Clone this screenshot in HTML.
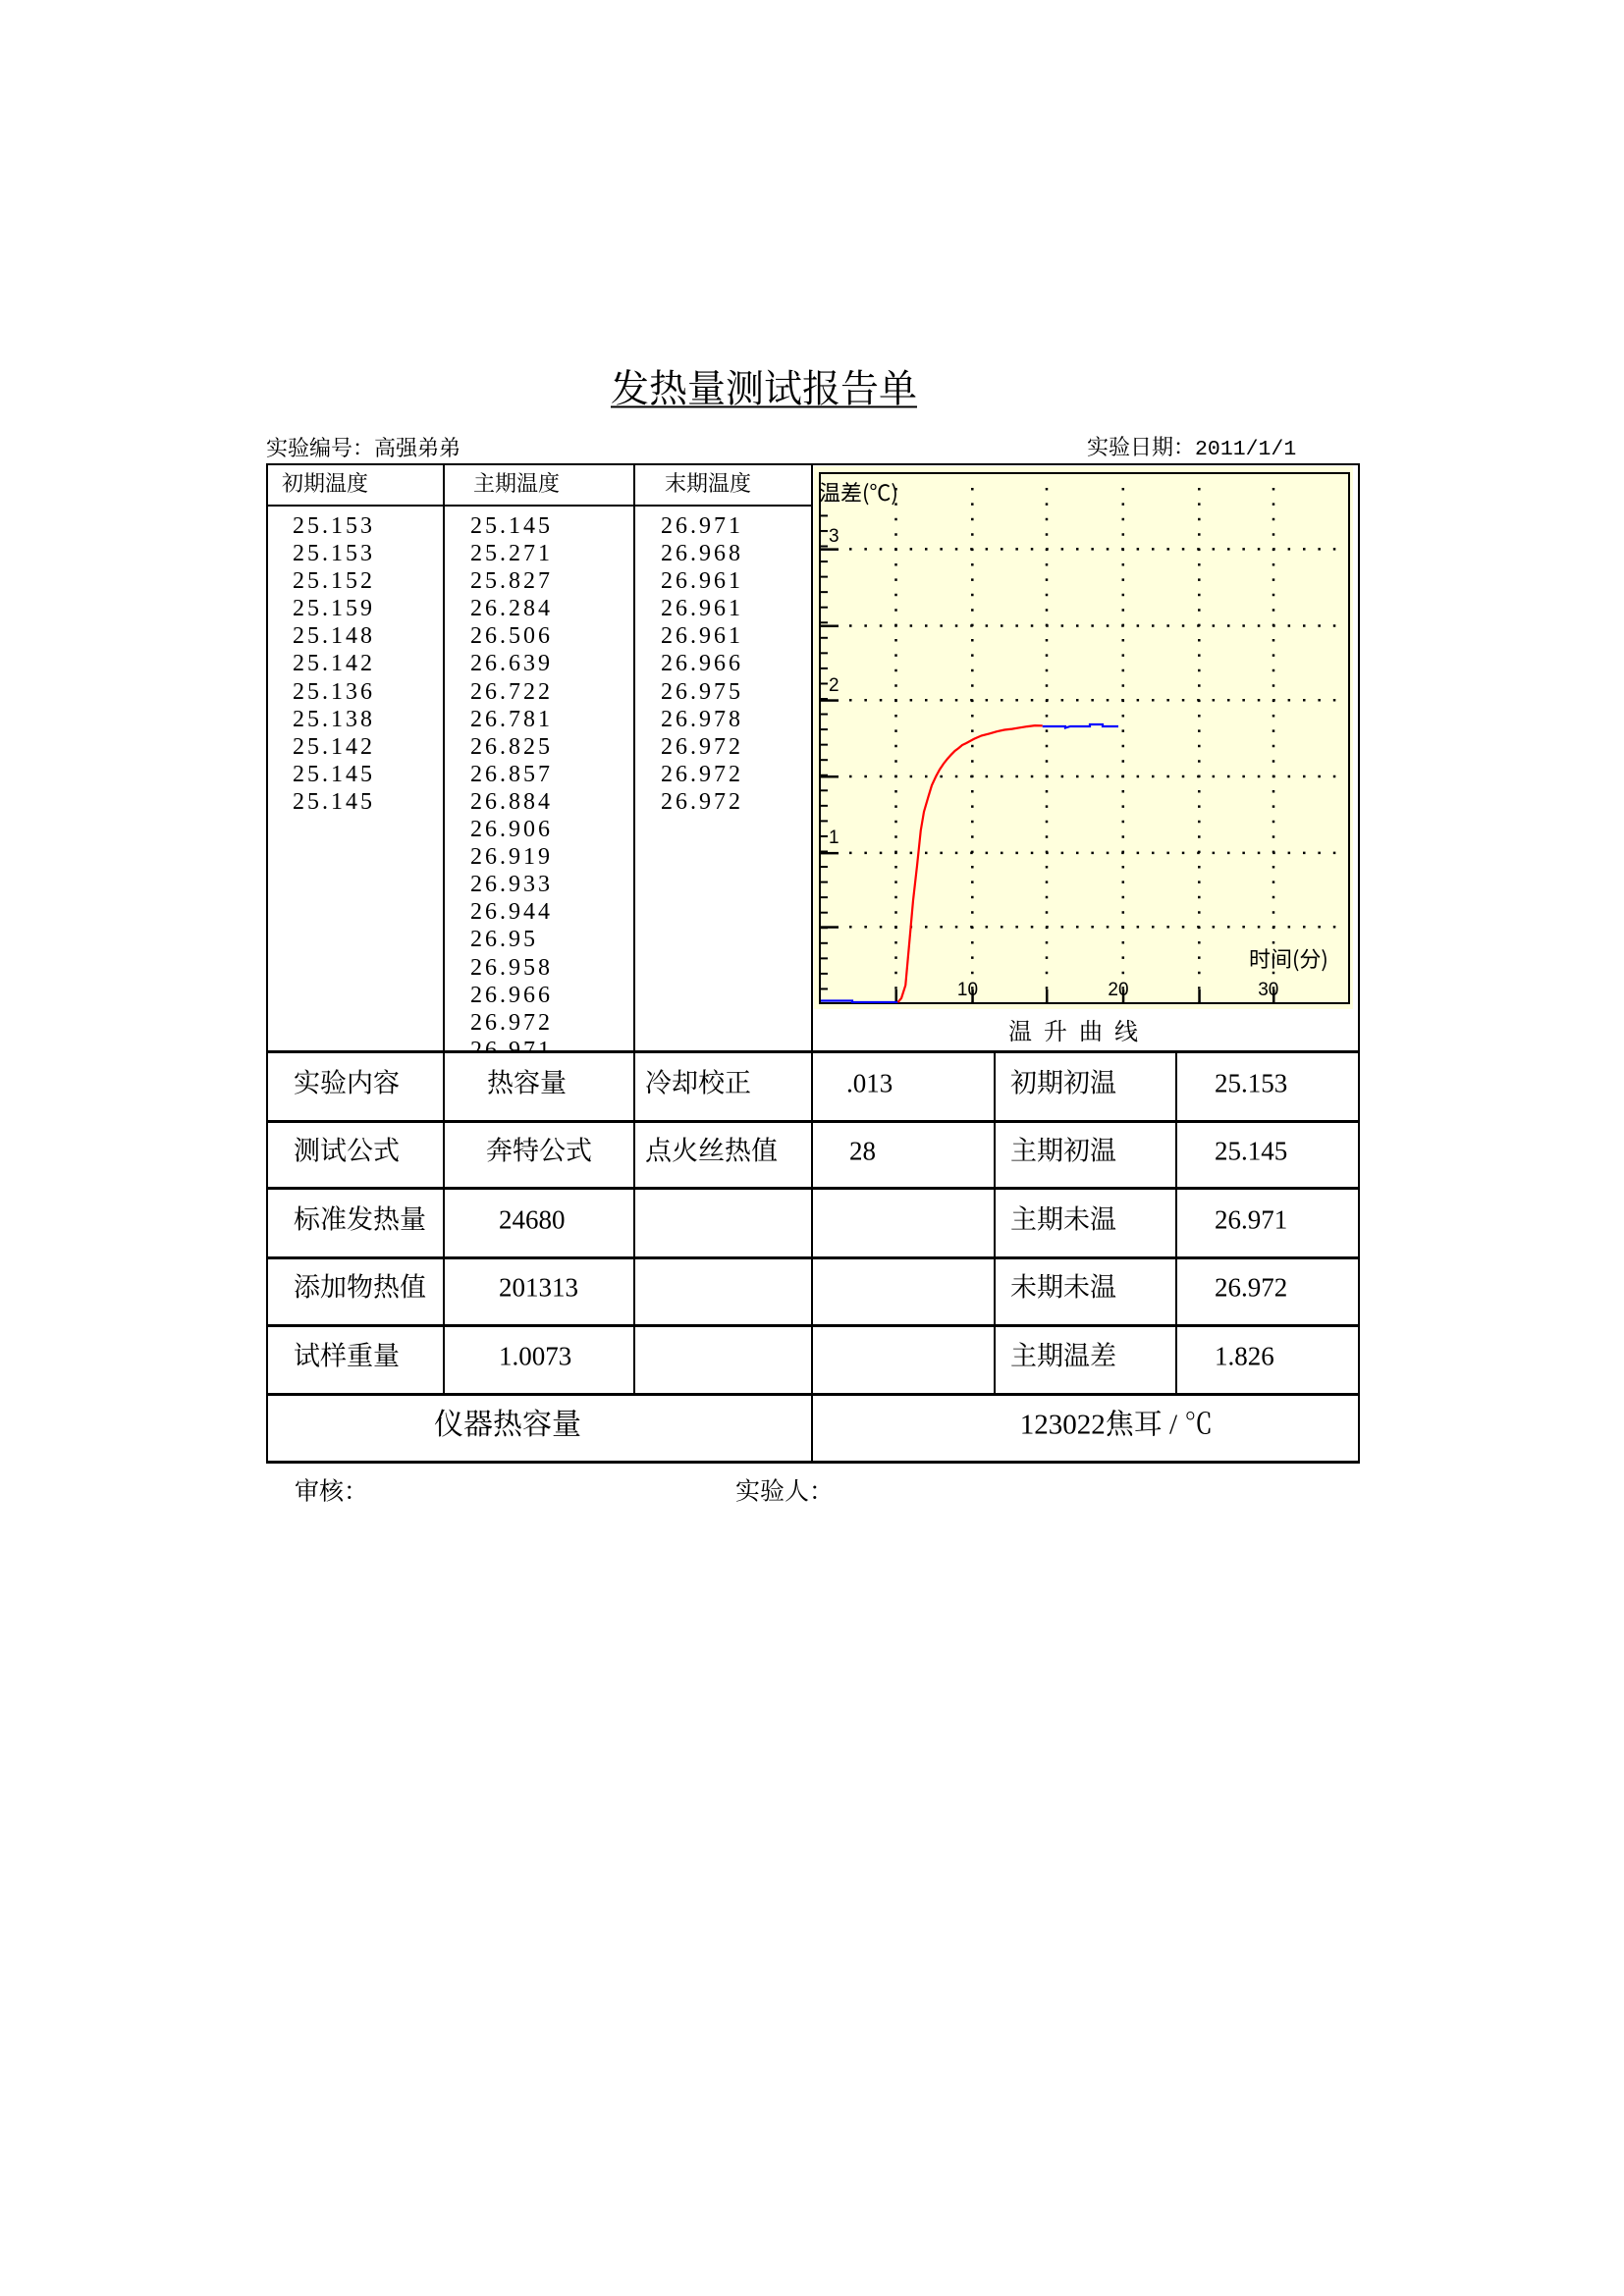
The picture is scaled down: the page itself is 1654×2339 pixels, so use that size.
<!DOCTYPE html>
<html><head><meta charset="utf-8"><style>
html,body{margin:0;padding:0;background:#fff}
body{width:1654px;height:2339px;position:relative;overflow:hidden;font-family:"Liberation Serif","Noto Serif CJK SC",serif;color:#000}
.a{position:absolute;white-space:nowrap;line-height:1}
.h{position:absolute;background:#000}
.cn{font-family:"Liberation Serif","Noto Serif CJK SC",serif}
.num{font-family:"Liberation Serif",serif;font-size:24px;letter-spacing:3px;line-height:28.1px}
.t{font-size:27px;transform:translateY(-50%)}
</style></head><body>
<div class="a cn" style="left:778px;top:397px;transform:translate(-50%,-50%);font-size:39px;text-decoration:underline;text-underline-offset:4px;text-decoration-thickness:2px">发热量测试报告单</div>
<div class="a cn" style="left:271px;top:457px;transform:translateY(-50%);font-size:22px">实验编号：高强弟弟</div>
<div class="a cn" style="left:1107px;top:457px;transform:translateY(-50%);font-size:22px">实验日期：<span style="font-family:'Liberation Mono',monospace;font-size:21.5px">2011/1/1</span></div>

<div class="h" style="left:271px;top:472px;width:1114px;height:2px"></div>
<div class="h" style="left:271px;top:514px;width:556px;height:2px"></div>
<div class="h" style="left:271px;top:1070px;width:1114px;height:3px"></div>
<div class="h" style="left:271px;top:1141px;width:1114px;height:3px"></div>
<div class="h" style="left:271px;top:1209px;width:1114px;height:3px"></div>
<div class="h" style="left:271px;top:1280px;width:1114px;height:3px"></div>
<div class="h" style="left:271px;top:1349px;width:1114px;height:3px"></div>
<div class="h" style="left:271px;top:1419px;width:1114px;height:3px"></div>
<div class="h" style="left:271px;top:1488px;width:1114px;height:3px"></div>
<div class="h" style="left:271px;top:472px;width:2px;height:1019px"></div>
<div class="h" style="left:1383px;top:472px;width:2px;height:1019px"></div>
<div class="h" style="left:451px;top:472px;width:2px;height:948px"></div>
<div class="h" style="left:645px;top:472px;width:2px;height:948px"></div>
<div class="h" style="left:826px;top:472px;width:2px;height:1019px"></div>
<div class="h" style="left:1012px;top:1071px;width:2px;height:349px"></div>
<div class="h" style="left:1197px;top:1071px;width:2px;height:349px"></div>

<div class="a cn" style="left:287px;top:493px;transform:translateY(-50%);font-size:22px">初期温度</div>
<div class="a cn" style="left:482px;top:493px;transform:translateY(-50%);font-size:22px">主期温度</div>
<div class="a cn" style="left:677px;top:493px;transform:translateY(-50%);font-size:22px">末期温度</div>

<div style="position:absolute;left:273px;top:516px;width:553px;height:554px;overflow:hidden">
<div class="a num" style="left:25px;top:6px;white-space:pre">25.153
25.153
25.152
25.159
25.148
25.142
25.136
25.138
25.142
25.145
25.145</div>
<div class="a num" style="left:206px;top:6px;white-space:pre">25.145
25.271
25.827
26.284
26.506
26.639
26.722
26.781
26.825
26.857
26.884
26.906
26.919
26.933
26.944
26.95
26.958
26.966
26.972
26.971</div>
<div class="a num" style="left:400px;top:6px;white-space:pre">26.971
26.968
26.961
26.961
26.961
26.966
26.975
26.978
26.972
26.972
26.972</div>
</div>

<div style="position:absolute;left:829px;top:475px;width:549px;height:553px;background:#ffffdd"></div>
<svg style="position:absolute;left:835px;top:482px;overflow:visible" width="539" height="540" viewBox="0 0 539 540">
<defs>
<pattern id="lt" patternUnits="userSpaceOnUse" width="20" height="15.55" patternTransform="translate(0,540)"><rect x="0" y="0" width="8" height="2" fill="#000"/></pattern>
<pattern id="bt" patternUnits="userSpaceOnUse" width="15.5" height="20" patternTransform="translate(2,0)"><rect x="0" y="0" width="2" height="6" fill="#000"/></pattern>
<clipPath id="cp"><rect x="0" y="0" width="539" height="540"/></clipPath>
</defs>
<g stroke="#000" stroke-width="2.5" stroke-dasharray="2.5 12.9" fill="none">
<line x1="77.5" y1="15" x2="77.5" y2="540"/><line x1="155.3" y1="15" x2="155.3" y2="540"/><line x1="231" y1="15" x2="231" y2="540"/><line x1="308.8" y1="15" x2="308.8" y2="540"/><line x1="386.3" y1="15" x2="386.3" y2="540"/><line x1="462" y1="15" x2="462" y2="540"/>
<line x1="30" y1="77.4" x2="539" y2="77.4"/><line x1="30" y1="155.5" x2="539" y2="155.5"/><line x1="30" y1="231.3" x2="539" y2="231.3"/><line x1="30" y1="309" x2="539" y2="309"/><line x1="30" y1="386.9" x2="539" y2="386.9"/><line x1="30" y1="462.3" x2="539" y2="462.3"/>
</g>
<rect x="0" y="40" width="8" height="500" fill="url(#lt)"/>
<g fill="#000"><rect x="0" y="76.4" width="19" height="2.5"/><rect x="0" y="154.5" width="19" height="2.5"/><rect x="0" y="230.3" width="19" height="2.5"/><rect x="0" y="308" width="19" height="2.5"/><rect x="0" y="385.9" width="19" height="2.5"/><rect x="0" y="461.3" width="19" height="2.5"/>
<rect x="76.5" y="526" width="2.5" height="14"/><rect x="154.3" y="526" width="2.5" height="14"/><rect x="230" y="526" width="2.5" height="14"/><rect x="307.8" y="526" width="2.5" height="14"/><rect x="385.3" y="526" width="2.5" height="14"/><rect x="461" y="526" width="2.5" height="14"/></g>
<rect x="0" y="534" width="539" height="6" fill="url(#bt)"/>
<rect x="0" y="0" width="539" height="540" fill="none" stroke="#000" stroke-width="2"/>
<g clip-path="url(#cp)" fill="none" stroke-width="2.2">
<polyline stroke="#0000ff" points="1,537.5 33,537.5 33,539 79.5,539"/>
<polyline stroke="#ff0000" points="79.5,539 83,535 87.25,521.7 91,480 95,435.2 99,400 102.75,364.1 106,345 110.5,329.6 114,318 118.25,308.9 122,302 126,296 130,291 133.75,286.8 137.5,283 141.5,280 145,277 149.25,275 157,270.8 164.75,267.4 172.5,265.4 180.25,263.2 188,261.5 195.75,260.6 203.5,259.3 211.25,258.1 219,257.1 226.75,257.3"/>
<polyline stroke="#0000ff" points="226.75,258 250,258 250,259.5 255,258 275,258 275,256 288,256 288,258 304,258"/>
</g>
<g font-family="Liberation Sans, sans-serif" font-size="19" fill="#000">
<text x="9" y="70">3</text><text x="9" y="222">2</text><text x="9" y="377">1</text>
<text x="150.5" y="532" text-anchor="middle">10</text><text x="304" y="532" text-anchor="middle">20</text><text x="456.8" y="532" text-anchor="middle">30</text>
</g>
<text x="-1" y="28" font-family="Noto Sans CJK SC, sans-serif" font-size="22" fill="#000">温差(℃)</text>
<text x="437" y="503" font-family="Noto Sans CJK SC, sans-serif" font-size="22" fill="#000">时间(分)</text>
</svg>
<div class="a cn" style="left:1099px;top:1052px;transform:translate(-50%,-50%);font-size:24px;letter-spacing:12px">温升曲线</div>

<div class="a t" style="left:299px;top:1104px">实验内容</div>
<div class="a t" style="left:496px;top:1104px">热容量</div>
<div class="a t" style="left:657px;top:1104px">冷却校正</div>
<div class="a t" style="left:862px;top:1104px">.013</div>
<div class="a t" style="left:1029px;top:1104px">初期初温</div>
<div class="a t" style="left:1237px;top:1104px">25.153</div>

<div class="a t" style="left:299px;top:1173px">测试公式</div>
<div class="a t" style="left:495px;top:1173px">奔特公式</div>
<div class="a t" style="left:657px;top:1173px">点火丝热值</div>
<div class="a t" style="left:865px;top:1173px">28</div>
<div class="a t" style="left:1029px;top:1173px">主期初温</div>
<div class="a t" style="left:1237px;top:1173px">25.145</div>

<div class="a t" style="left:299px;top:1243px">标准发热量</div>
<div class="a t" style="left:508px;top:1243px">24680</div>
<div class="a t" style="left:1029px;top:1243px">主期未温</div>
<div class="a t" style="left:1237px;top:1243px">26.971</div>

<div class="a t" style="left:299px;top:1312px">添加物热值</div>
<div class="a t" style="left:508px;top:1312px">201313</div>
<div class="a t" style="left:1029px;top:1312px">未期未温</div>
<div class="a t" style="left:1237px;top:1312px">26.972</div>

<div class="a t" style="left:299px;top:1382px">试样重量</div>
<div class="a t" style="left:508px;top:1382px">1.0073</div>
<div class="a t" style="left:1029px;top:1382px">主期温差</div>
<div class="a t" style="left:1237px;top:1382px">1.826</div>

<div class="a" style="left:517px;top:1452px;transform:translate(-50%,-50%);font-size:30px">仪器热容量</div>
<div class="a" style="left:1137px;top:1452px;transform:translate(-50%,-50%);font-size:29px">123022焦耳 / ℃</div>

<div class="a t" style="left:300px;top:1520px;font-size:25px">审核：</div>
<div class="a t" style="left:749px;top:1520px;font-size:25px">实验人：</div>
</body></html>
